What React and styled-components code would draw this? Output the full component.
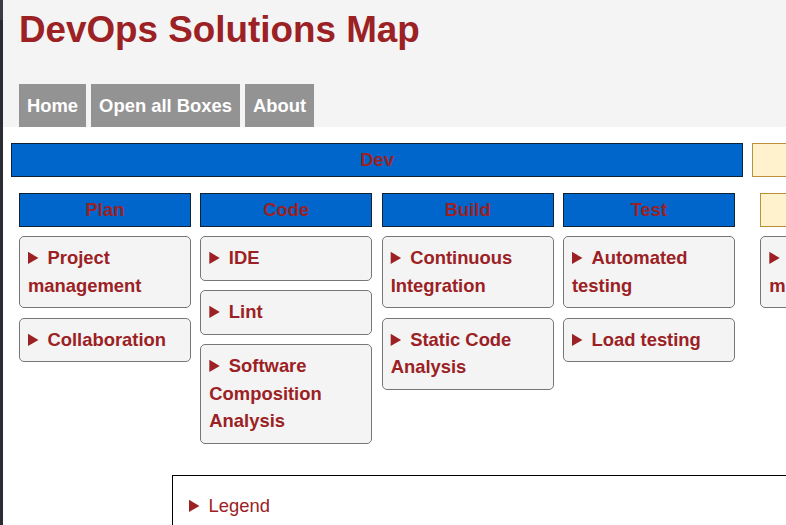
import React from 'react';
import styled, { createGlobalStyle } from 'styled-components';

const GlobalStyle = createGlobalStyle`
	html, body {
		margin: 0;
		padding: 0;
		background: #ffffff;
		font-family: 'Liberation Sans', Arial, sans-serif;
	}
`;

const MAROON = '#9b2124';

const Shell = styled.div`
	display: flex;
	width: 786px;
	height: 525px;
	overflow: hidden;
`;

const Edge = styled.div`
	flex: 0 0 3px;
	background: linear-gradient(to bottom, #3b3c41 0, #3b3c41 20px, #2b2c31 20px);
`;

const Main = styled.main`
	flex: 1;
	min-width: 0;
	overflow: hidden;
`;

const Header = styled.header`
	background: #f4f4f4;
	padding: 10px 16px 0;
	height: 127px;
	box-sizing: border-box;
`;

const Title = styled.h1`
	margin: 0;
	font-size: 36.8px;
	line-height: 40px;
	font-weight: bold;
	color: ${MAROON};
`;

const Nav = styled.nav`
	display: flex;
	gap: 5px;
	margin-top: 34px;
`;

const NavButton = styled.a`
	display: block;
	background: #939393;
	color: #ffffff;
	font-size: 18.4px;
	font-weight: bold;
	line-height: 21px;
	padding: 11px 8px;
	text-decoration: none;
`;

const Groups = styled.div`
	display: flex;
	gap: 9.3px;
	padding: 16px 0 0 8px;
`;

const Group = styled.section`
	flex: 0 0 732px;
	display: flex;
	flex-direction: column;
`;

const GroupBar = styled.div`
	height: 34px;
	box-sizing: border-box;
	border: 1px solid ${(p) => p.$border};
	background: ${(p) => p.$bg};
	color: ${MAROON};
	font-size: 18.4px;
	font-weight: bold;
	line-height: 32px;
	text-align: center;
`;

const Stages = styled.div`
	display: grid;
	grid-template-columns: repeat(4, 172px);
	column-gap: 9.33px;
	padding: 16px 8px 0;
`;

const Stage = styled.div`
	display: flex;
	flex-direction: column;
	gap: 9.3px;
`;

const StageHead = styled.div`
	height: 34px;
	box-sizing: border-box;
	border: 1px solid ${(p) => p.$border};
	background: ${(p) => p.$bg};
	color: ${MAROON};
	font-size: 18.4px;
	font-weight: bold;
	line-height: 32px;
	text-align: center;
`;

const Card = styled.details`
	box-sizing: border-box;
	border: 1px solid #777777;
	border-radius: 5px;
	background: #f4f4f4;
	padding: 7px 8px 8px;
	color: ${MAROON};
	font-size: 18.4px;
	font-weight: bold;
	line-height: 27.6px;

	summary {
		cursor: pointer;
	}
`;

const Legend = styled.details`
	margin: 31px 0 0 169px;
	width: 700px;
	border: 1px solid #000000;
	padding: 16px 16px;
	color: ${MAROON};
	font-size: 18.4px;
	line-height: 27.6px;
`;

const devStages = [
	{ name: 'Plan', items: ['Project management', 'Collaboration'] },
	{ name: 'Code', items: ['IDE', 'Lint', 'Software Composition Analysis'] },
	{ name: 'Build', items: ['Continuous Integration', 'Static Code Analysis'] },
	{ name: 'Test', items: ['Automated testing', 'Load testing'] },
];

const opsStages = [
	{ name: 'Release', items: ['Release management'] },
	{ name: 'Deploy', items: ['Deployment'] },
	{ name: 'Operate', items: ['Configuration'] },
	{ name: 'Monitor', items: ['Monitoring'] },
];

const groups = [
	{ name: 'Dev', bg: '#0066cc', border: '#0f2236', stages: devStages },
	{ name: 'Ops', bg: '#fff2cc', border: '#b8913a', stages: opsStages },
];

export default function App() {
	return (
		<>
			<GlobalStyle />
			<Shell>
				<Edge />
				<Main>
					<Header>
						<Title>DevOps Solutions Map</Title>
						<Nav>
							<NavButton href='#'>Home</NavButton>
							<NavButton href='#'>Open all Boxes</NavButton>
							<NavButton href='#'>About</NavButton>
						</Nav>
					</Header>
					<Groups>
						{groups.map((g) => (
							<Group key={g.name}>
								<GroupBar $bg={g.bg} $border={g.border}>
									{g.name}
								</GroupBar>
								<Stages>
									{g.stages.map((s) => (
										<Stage key={s.name}>
											<StageHead $bg={g.bg} $border={g.border}>
												{s.name}
											</StageHead>
											{s.items.map((item) => (
												<Card key={item}>
													<summary>{item}</summary>
												</Card>
											))}
										</Stage>
									))}
								</Stages>
							</Group>
						))}
					</Groups>
					<Legend>
						<summary>Legend</summary>
					</Legend>
				</Main>
			</Shell>
		</>
	);
}
